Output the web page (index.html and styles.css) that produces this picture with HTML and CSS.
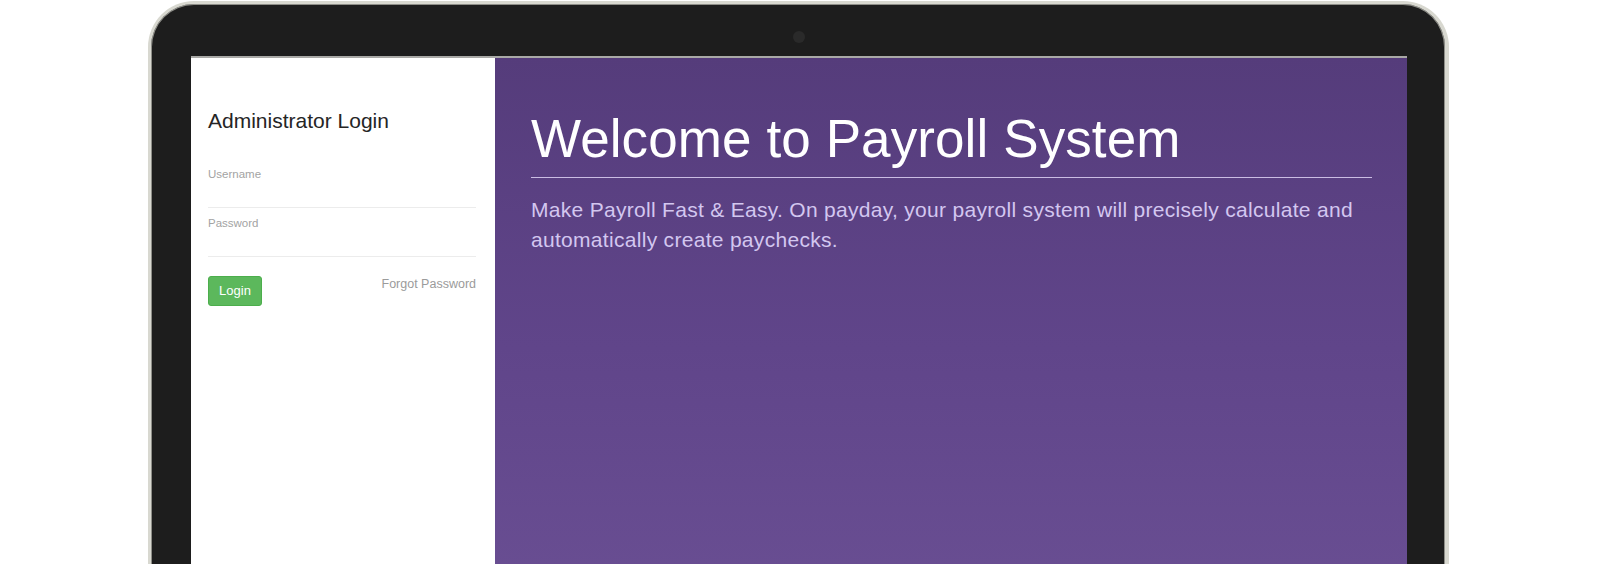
FILE: index.html
```html
<!DOCTYPE html>
<html lang="en">
<head>
<meta charset="utf-8">
<title>Payroll System</title>
<link rel="stylesheet" href="styles.css">
</head>
<body>
<div class="stage">
  <div class="laptop">
    <div class="bezel-top"><span class="camera"></span></div>
    <div class="screen">
      <aside class="login">
        <h2 class="login-title">Administrator Login</h2>
        <form class="login-form">
          <label class="field">
            <span class="field-label">Username</span>
            <input class="field-input" type="text">
          </label>
          <label class="field">
            <span class="field-label">Password</span>
            <input class="field-input" type="password">
          </label>
          <div class="actions">
            <button class="btn-login" type="button">Login</button>
            <a class="forgot" href="#">Forgot Password</a>
          </div>
        </form>
      </aside>
      <main class="hero">
        <h1 class="hero-title">Welcome to Payroll System</h1>
        <hr class="hero-rule">
        <p class="hero-text">Make Payroll Fast &amp; Easy. On payday, your payroll system will precisely calculate and automatically create paychecks.</p>
      </main>
    </div>
  </div>
</div>
</body>
</html>
```
FILE: styles.css
```css
* { box-sizing: border-box; }

html, body {
  margin: 0;
  padding: 0;
  height: 564px;
  overflow: hidden;
  background: #ffffff;
  font-family: "Liberation Sans", Arial, sans-serif;
}

.stage {
  padding: 1px 0 0 148px;
}

.laptop {
  width: 1301px;
  height: 700px;
  background: #1d1d1d;
  border-style: solid;
  border-color: #d8d8d0;
  border-width: 3px 4px 0 3px;
  border-radius: 46px 46px 0 0;
  box-shadow: inset 0 0 0 1px #8e8e88;
  padding: 0 38px 0 40px;
  display: flex;
  flex-direction: column;
}

.bezel-top {
  height: 52px;
  display: flex;
  justify-content: center;
  align-items: flex-end;
  padding-bottom: 13px;
}

.camera {
  width: 12px;
  height: 12px;
  border-radius: 50%;
  background: #2a2a2a;
}

.screen {
  flex: 1;
  display: grid;
  grid-template-columns: 304px 912px;
  border-top: 2px solid #a9a9a6;
}

/* Login panel */
.login {
  background: #ffffff;
  padding: 51px 19px 0 17px;
}

.login-title {
  margin: 0;
  font-size: 21px;
  line-height: 24px;
  font-weight: normal;
  color: #252525;
}

.login-form {
  margin-top: 35px;
  display: flex;
  flex-direction: column;
}

.field {
  display: flex;
  flex-direction: column;
  margin-bottom: 9px;
}

.field-label {
  font-size: 11.5px;
  line-height: 13px;
  color: #a3a3a3;
}

.field-input {
  height: 27px;
  border: 0;
  border-bottom: 1px solid #ececec;
  padding: 0;
  margin: 0;
  outline: none;
  background: transparent;
  font: inherit;
}

.actions {
  margin-top: 10px;
  display: flex;
  justify-content: space-between;
  align-items: flex-start;
}

.btn-login {
  width: 54px;
  height: 30px;
  padding: 0;
  border: 1px solid #4cae4c;
  border-radius: 3px;
  background: #5cb85c;
  color: #ffffff;
  font-family: inherit;
  font-size: 13px;
  line-height: 28px;
}

.forgot {
  margin-top: 1px;
  font-size: 12.5px;
  line-height: 15px;
  color: #9b9b9b;
  text-decoration: none;
}

/* Hero panel */
.hero {
  background: linear-gradient(180deg, #553c7b 0%, #60458a 45%, #6d5296 100%);
  padding: 54px 35px 0 36px;
}

.hero-title {
  margin: 0;
  font-size: 53px;
  line-height: 53px;
  font-weight: normal;
  letter-spacing: 0.1px;
  color: #ffffff;
}

.hero-rule {
  margin: 12px 0 0;
  border: 0;
  height: 1px;
  background: #cbbde3;
}

.hero-text {
  margin: 17px 0 0;
  font-size: 21px;
  line-height: 30px;
  letter-spacing: 0.3px;
  color: #d3c7f0;
}
```
